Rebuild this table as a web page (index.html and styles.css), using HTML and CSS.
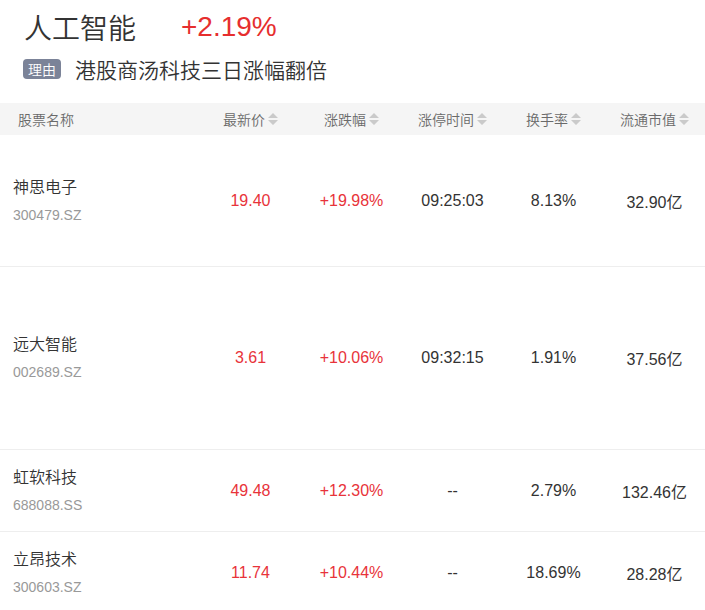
FILE: index.html
```html
<!DOCTYPE html>
<html lang="zh-CN">
<head>
<meta charset="utf-8">
<title>人工智能</title>
<link rel="stylesheet" href="styles.css">
</head>
<body>
<div class="top">
  <div class="title-line">
    <span class="title">人工智能</span>
    <span class="chg">+2.19%</span>
  </div>
  <div class="reason-line">
    <span class="badge">理由</span>
    <span class="reason">港股商汤科技三日涨幅翻倍</span>
  </div>
</div>

<div class="table">
  <div class="row head">
    <div class="cell name-h">股票名称</div>
    <div class="cell"><span>最新价</span><svg class="sort" viewBox="0 0 10 14"><path d="M0 6 L5 1 L10 6 Z M0 8 L5 13 L10 8 Z"/></svg></div>
    <div class="cell"><span>涨跌幅</span><svg class="sort" viewBox="0 0 10 14"><path d="M0 6 L5 1 L10 6 Z M0 8 L5 13 L10 8 Z"/></svg></div>
    <div class="cell"><span>涨停时间</span><svg class="sort" viewBox="0 0 10 14"><path d="M0 6 L5 1 L10 6 Z M0 8 L5 13 L10 8 Z"/></svg></div>
    <div class="cell"><span>换手率</span><svg class="sort" viewBox="0 0 10 14"><path d="M0 6 L5 1 L10 6 Z M0 8 L5 13 L10 8 Z"/></svg></div>
    <div class="cell"><span>流通市值</span><svg class="sort" viewBox="0 0 10 14"><path d="M0 6 L5 1 L10 6 Z M0 8 L5 13 L10 8 Z"/></svg></div>
  </div>

  <div class="row r1">
    <div class="cell name"><div class="nm">神思电子</div><div class="code">300479.SZ</div></div>
    <div class="cell red">19.40</div>
    <div class="cell red">+19.98%</div>
    <div class="cell">09:25:03</div>
    <div class="cell">8.13%</div>
    <div class="cell">32.90亿</div>
  </div>

  <div class="row r2">
    <div class="cell name"><div class="nm">远大智能</div><div class="code">002689.SZ</div></div>
    <div class="cell red">3.61</div>
    <div class="cell red">+10.06%</div>
    <div class="cell">09:32:15</div>
    <div class="cell">1.91%</div>
    <div class="cell">37.56亿</div>
  </div>

  <div class="row r3">
    <div class="cell name"><div class="nm">虹软科技</div><div class="code">688088.SS</div></div>
    <div class="cell red">49.48</div>
    <div class="cell red">+12.30%</div>
    <div class="cell">--</div>
    <div class="cell">2.79%</div>
    <div class="cell">132.46亿</div>
  </div>

  <div class="row r4">
    <div class="cell name"><div class="nm">立昂技术</div><div class="code">300603.SZ</div></div>
    <div class="cell red">11.74</div>
    <div class="cell red">+10.44%</div>
    <div class="cell">--</div>
    <div class="cell">18.69%</div>
    <div class="cell">28.28亿</div>
  </div>
</div>
</body>
</html>
```

FILE: styles.css
```css
* { box-sizing: border-box; }
html, body {
  margin: 0;
  padding: 0;
  background: #fff;
  font-family: "Liberation Sans", Arial, "Noto Sans CJK SC", sans-serif;
  color: #333;
}
.top {
  padding: 8px 0 0 24px;
}
.title-line {
  display: flex;
  align-items: center;
  height: 38px;
  font-size: 28px;
}
.title { color: #333; font-weight: 350; }
.chg {
  color: #e62e2e;
  margin-left: 45px;
}
.reason-line {
  display: flex;
  align-items: center;
  height: 30px;
  margin-top: 8px;
}
.badge {
  display: inline-flex;
  align-items: center;
  justify-content: center;
  width: 38px;
  height: 20px;
  border-radius: 4px;
  background: #7b8398;
  color: #fff;
  font-size: 14px;
  font-weight: 350;
  margin-left: -1px;
}
.reason {
  font-size: 21px;
  font-weight: 350;
  color: #333;
  margin-left: 14px;
  line-height: 30px;
  padding-top: 3px;
}
.table {
  margin-top: 19px;
  width: 705px;
}
.row {
  display: grid;
  grid-template-columns: 200px repeat(5, 1fr);
  align-items: center;
  border-bottom: 1px solid #eeeeee;
}
.row.head {
  height: 32px;
  background: #f5f5f5;
  border-bottom: none;
}
.row.head .cell {
  display: flex;
  align-items: center;
  justify-content: center;
  gap: 3px;
  font-size: 14px;
  font-weight: 350;
  color: #6a6a6a;
}
.row.head .cell.name-h {
  justify-content: flex-start;
  padding-left: 18px;
}
.sort {
  width: 10px;
  height: 14px;
  fill: #cacaca;
}
.r1 { height: 132px; }
.r2 { height: 183px; }
.r3 { height: 82px; }
.r4 { height: 82px; border-bottom: none; }
.cell {
  text-align: center;
  font-size: 16px;
  color: #333;
}
.cell.red { color: #e8333a; }
.cell.name {
  text-align: left;
  padding-left: 13px;
}
.nm {
  font-size: 16px;
  font-weight: 350;
  line-height: 24px;
  color: #333;
}
.code {
  font-size: 14px;
  line-height: 22px;
  margin-top: 4px;
  color: #999;
}
```
